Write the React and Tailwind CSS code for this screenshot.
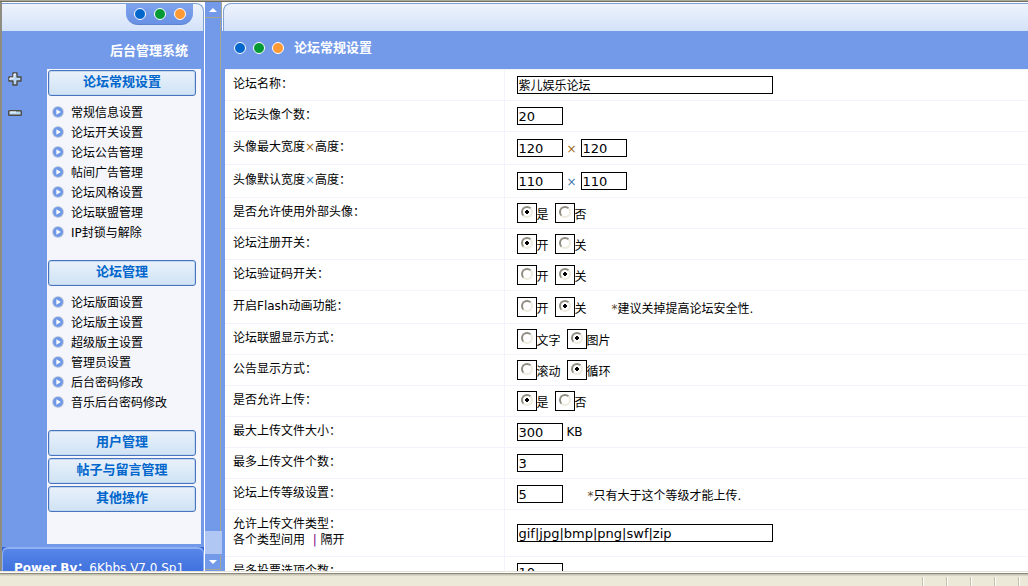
import React from "react";

const groups = [
  {
    title: "论坛常规设置",
    items: ["常规信息设置", "论坛开关设置", "论坛公告管理", "帖间广告管理", "论坛风格设置", "论坛联盟管理", "IP封锁与解除"],
  },
  {
    title: "论坛管理",
    items: ["论坛版面设置", "论坛版主设置", "超级版主设置", "管理员设置", "后台密码修改", "音乐后台密码修改"],
  },
  { title: "用户管理", items: [] },
  { title: "帖子与留言管理", items: [] },
  { title: "其他操作", items: [] },
];

function Dots({ className }) {
  return (
    <span className={"flex items-center " + className} aria-hidden="true">
      <span className="size-3 rounded-full border border-white bg-[#0066cc]" />
      <span className="size-3 rounded-full border border-white bg-[#009933]" />
      <span className="size-3 rounded-full border border-white bg-[#ff9933]" />
    </span>
  );
}

function PlayIcon() {
  return (
    <svg viewBox="0 0 12 12" className="size-3 shrink-0" aria-hidden="true">
      <circle cx="6" cy="6" r="6" fill="#c3cde0" />
      <circle cx="6" cy="6" r="5" fill="#6f98e6" />
      <path d="M4.4 3.2 8.8 6 4.4 8.8Z" fill="#fff" />
    </svg>
  );
}

function Menu() {
  return (
    <nav className="flex-1 bg-[#f4f6fc] pt-px pl-px">
      {groups.map((g) => (
        <section key={g.title}>
          <button
            type="button"
            className="mb-0.5 block h-[26px] w-[148px] rounded-[3px] border border-[#4674bf] bg-linear-to-b from-[#e9f1fb] to-[#cfe3f4] pb-0.5 text-center text-[13px] leading-5 font-bold text-[#0066cc] shadow-[inset_0_0_0_1px_#c3d6f0]"
          >
            {g.title}
          </button>
          {g.items.length > 0 && (
            <ul className="pt-1 pb-[18px] pl-1">
              {g.items.map((t) => (
                <li key={t}>
                  <a href="#" className="flex h-5 items-center gap-[7px]">
                    <PlayIcon />
                    <span className="pt-0.5">{t}</span>
                  </a>
                </li>
              ))}
            </ul>
          )}
        </section>
      ))}
    </nav>
  );
}

function Sidebar() {
  return (
    <aside className="flex w-[203px] shrink-0 flex-col overflow-hidden border-r border-white bg-[#739ae8]">
      <div className="flex h-[29px] shrink-0 justify-end bg-white pt-px">
        <div className="flex flex-1 items-start justify-end rounded-tr-lg border-t border-r border-[#7d9fd4] bg-linear-to-b from-[#eef3fc] to-[#d3e2f9] pr-[10px]">
          <div className="flex h-[21px] w-[67px] justify-center rounded-b-xl border-b border-[#5f82cf] bg-linear-to-b from-[#7ea3ee] to-[#6890e4]">
            <Dots className="gap-2" />
          </div>
        </div>
      </div>
      <h1 className="flex h-[38px] shrink-0 items-center justify-end pt-0.5 pr-4 text-[13px] font-bold text-white">
        后台管理系统
      </h1>
      <div className="flex min-h-0 flex-1 pr-[3px]">
        <div className="flex w-[45px] shrink-0 flex-col items-start gap-6 pt-[3px] pl-[6px]">
          <button type="button" aria-label="展开">
            <svg viewBox="0 0 14 14" className="block size-[14px]">
              <path d="M5 1h4v4h4v4H9v4H5V9H1V5h4Z" fill="#b9d6f6" stroke="#4d4a42" strokeWidth="1.4" strokeLinejoin="round" />
              <path d="M6 5V2h2M2 8V6h4" fill="none" stroke="#fff" />
            </svg>
          </button>
          <button type="button" aria-label="收起">
            <svg viewBox="0 0 14 6" className="block h-[6px] w-[14px]">
              <rect x="0.7" y="0.7" width="12.6" height="4.6" rx="0.8" fill="#b9d6f6" stroke="#4d4a42" strokeWidth="1.4" />
              <path d="M2 2h6" stroke="#fff" />
            </svg>
          </button>
        </div>
        <Menu />
      </div>
      <footer className="mt-[3px] h-6 shrink-0 overflow-hidden bg-[#3468dc]">
        <p className="h-9 rounded-t-md border-x border-t-2 border-[#8fb1f3] bg-linear-to-b from-[#5686e8] to-[#3566d8] pt-[11px] pl-[11px] text-xs whitespace-nowrap text-white">
          <b>Power By：</b>6Kbbs V7.0 Sp1
        </p>
      </footer>
    </aside>
  );
}

function ScrollRail() {
  return (
    <div className="flex w-[17px] shrink-0 flex-col bg-[#739ae8]">
      <button type="button" aria-label="向上滚动" className="flex h-4 items-center justify-center border-r border-b border-[#a5a595]">
        <svg viewBox="0 0 8 4" className="h-1 w-2"><path d="M0 4 4 0l4 4Z" fill="#fff" /></svg>
      </button>
      <div className="mt-[2px] mr-px flex-1 border-r border-[#a5a595]" />
      <div className="h-[23px] bg-[#b0c6f3]" />
      <button type="button" aria-label="向下滚动" className="mt-px mb-px mr-px flex h-[15px] items-center justify-center border-r border-b border-[#a5a595]">
        <svg viewBox="0 0 8 4" className="h-1 w-2"><path d="M0 0h8L4 4Z" fill="#fff" /></svg>
      </button>
    </div>
  );
}

function TextBox({ id, value, wide, small, label }) {
  return (
    <input
      id={id}
      type="text"
      aria-label={label}
      defaultValue={value}
      className={
        "h-[18px] rounded-none border border-black bg-white " +
        (small ? "px-px pb-0.5 text-xs leading-4 " : "px-px text-[13px] leading-4 ") +
        (wide ? "w-64" : "w-[46px]")
      }
    />
  );
}

function Radios({ name, options, checked }) {
  return (
    <span className="flex gap-[6px]">
      {options.map((o, i) => (
        <label key={o} className="flex items-end leading-4">
          <span className="flex size-5 items-center justify-center border border-black pb-0.5">
            <input
              type="radio"
              name={name}
              defaultChecked={i === checked}
              className="size-3 appearance-none rounded-full border-2 border-t-[#8f8c80] border-r-[#eeebdf] border-b-[#eeebdf] border-l-[#8f8c80] bg-white checked:bg-[radial-gradient(circle,#000_2px,transparent_2px)]"
            />
          </span>
          {o}
        </label>
      ))}
    </span>
  );
}

function Row({ label, id, height, children }) {
  return (
    <tr className={"border-b border-[#f3f4fb] " + height}>
      <th scope="row" className="w-[279px] border-r border-[#f3f4fb] pb-[3px] pl-2 text-left align-middle leading-4 font-normal">
        {id ? <label htmlFor={id}>{label}</label> : label}
      </th>
      <td className="pl-3 align-middle">
        <div className="flex items-center">{children}</div>
      </td>
    </tr>
  );
}

const H = "h-[31px]";
const T = "h-[33px]";
const yes = ["是", "否"];
const open = ["开", "关"];

function Times({ className }) {
  return <span className={className}>×</span>;
}

function Note({ children }) {
  return (
    <span className="ml-[25px] pt-[3px]">
      <span className="text-[#5a4630]">*</span>
      {children}
    </span>
  );
}

function Settings() {
  return (
    <table className="w-full border-collapse border-t border-[#f3f4fb] bg-white">
      <tbody>
        <Row height={H} id="name" label="论坛名称："><TextBox id="name" wide small value="紫儿娱乐论坛" /></Row>
        <Row height={H} id="faces" label="论坛头像个数："><TextBox id="faces" value="20" /></Row>
        <Row height={T} id="maxw" label={<>头像最大宽度<Times className="text-[#a06a20]" />高度：</>}>
          <TextBox id="maxw" value="120" />
          <Times className="w-[18px] pt-0.5 text-center text-[#a06a20]" />
          <TextBox label="最大高度" value="120" />
        </Row>
        <Row height={T} id="defw" label={<>头像默认宽度<Times className="text-[#3f78a8]" />高度：</>}>
          <TextBox id="defw" value="110" />
          <Times className="w-[18px] pt-0.5 text-center text-[#3f78a8]" />
          <TextBox label="默认高度" value="110" />
        </Row>
        <Row height={H} label="是否允许使用外部头像："><Radios name="ext" options={yes} checked={0} /></Row>
        <Row height={H} label="论坛注册开关："><Radios name="reg" options={open} checked={0} /></Row>
        <Row height={H} label="论坛验证码开关："><Radios name="code" options={open} checked={1} /></Row>
        <Row height={T} label="开启Flash动画功能：">
          <Radios name="flash" options={open} checked={1} />
          <Note>建议关掉提高论坛安全性.</Note>
        </Row>
        <Row height={H} label="论坛联盟显示方式："><Radios name="union" options={["文字", "图片"]} checked={1} /></Row>
        <Row height={H} label="公告显示方式："><Radios name="notice" options={["滚动", "循环"]} checked={1} /></Row>
        <Row height={H} label="是否允许上传："><Radios name="upload" options={yes} checked={0} /></Row>
        <Row height={H} id="size" label="最大上传文件大小：">
          <TextBox id="size" value="300" />
          <span className="ml-1">KB</span>
        </Row>
        <Row height={H} id="count" label="最多上传文件个数："><TextBox id="count" value="3" /></Row>
        <Row height={H} id="level" label="论坛上传等级设置：">
          <TextBox id="level" value="5" />
          <Note>只有大于这个等级才能上传.</Note>
        </Row>
        <Row
          height="h-[47px]"
          id="types"
          label={<>允许上传文件类型：<br />各个类型间用&nbsp; <span className="text-[#800080]">|</span> 隔开</>}
        >
          <TextBox id="types" wide value="gif|jpg|bmp|png|swf|zip" />
        </Row>
        <Row height={H} id="votes" label="最多投票选项个数："><TextBox id="votes" value="10" /></Row>
      </tbody>
    </table>
  );
}

export default function App() {
  return (
    <div className="flex h-screen flex-col overflow-hidden bg-[#ece9d8] font-['DejaVu_Sans','Noto_Sans_CJK_SC',sans-serif] text-xs text-black">
      <div className="h-0.5 shrink-0 border-b border-[#716f64] bg-[#aca899]" />
      <div className="flex min-h-0 flex-1 border-l-2 border-[#8f8c80]">
        <Sidebar />
        <ScrollRail />
        <main className="min-w-0 flex-1 overflow-hidden bg-[#739ae8]">
          <div className="h-[29px] bg-white pt-px pl-px">
            <div className="h-7 rounded-tl-lg border-t border-l border-[#7d9fd4] bg-linear-to-b from-[#eef3fc] to-[#d3e2f9]" />
          </div>
          <header className="flex h-[38px] items-center gap-[10px] pb-1 pl-3">
            <Dots className="gap-[7px]" />
            <h2 className="text-[13px] font-bold text-white">论坛常规设置</h2>
          </header>
          <form className="pl-[3px]">
            <Settings />
          </form>
        </main>
      </div>
      <footer className="flex h-[15px] shrink-0 flex-col">
        <div className="h-px bg-[#e6e3d6]" />
        <div className="h-px bg-white" />
        <div className="h-px bg-[#8b887c]" />
        <div className="h-px bg-[#c6c2b1]" />
        <div className="h-px bg-[#dad6c6]" />
        <div className="mt-px flex flex-1 justify-end">
          {[0, 1, 2, 3].map((i) => (
            <span key={i} className="w-6 border-l border-[#c2bfae] shadow-[inset_1px_0_0_#fff]" />
          ))}
          <span className="w-[10px] border-l border-[#c2bfae] shadow-[inset_1px_0_0_#fff]" />
        </div>
      </footer>
    </div>
  );
}
